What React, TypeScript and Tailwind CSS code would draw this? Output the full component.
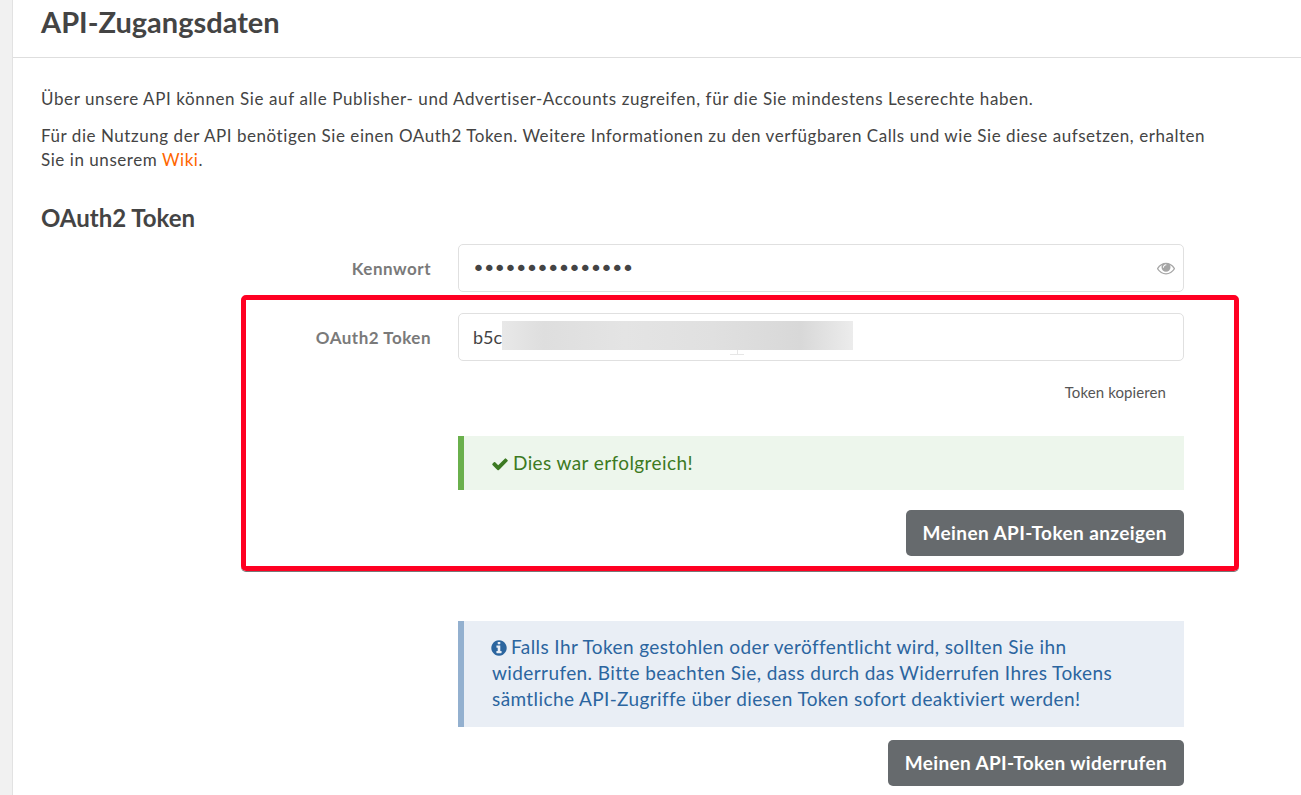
const Check = () => (
  <svg viewBox="0 0 1792 1792" className="w-[18px] h-[18px] inline-block shrink-0 fill-[#3c7a22] mr-[4px] ml-[-1px] align-[-3px]">
    <path d="M1671 566q0 40-28 68l-724 724-136 136q-28 28-68 28t-68-28l-136-136-362-362q-28-28-28-68t28-68l136-136q28-28 68-28t68 28l294 295 656-657q28-28 68-28t68 28l136 136q28 28 28 68z" />
  </svg>
)

const Info = () => (
  <svg viewBox="0 0 1792 1792" className="w-[18px] h-[18px] inline-block shrink-0 fill-[#2b659f] mr-[3px] ml-[-2px] align-[-3px]">
    <path d="M1152 1376v-160q0-14-9-23t-23-9h-96v-512q0-14-9-23t-23-9h-320q-14 0-23 9t-9 23v160q0 14 9 23t23 9h96v320h-96q-14 0-23 9t-9 23v160q0 14 9 23t23 9h448q14 0 23-9t9-23zm-128-896v-160q0-14-9-23t-23-9h-192q-14 0-23 9t-9 23v160q0 14 9 23t23 9h192q14 0 23-9t9-23zm640 416q0 209-103 385.5t-279.500 279.500-385.500 103-385.500-103-279.500-279.500-103-385.500 103-385.500 279.500-279.500 385.500-103 385.500 103 279.500 279.500 103 385.500z" />
  </svg>
)

const EyeIcon = () => (
  <svg viewBox="0 0 1792 1792" className="w-[18px] h-[18px] shrink-0 fill-[#a6a6a6]">
    <path d="M1664 960q-152-236-381-353 61 104 61 225 0 185-131.500 316.500t-316.500 131.500-316.500-131.500-131.500-316.500q0-121 61-225-229 117-381 353 133 205 333.500 326.500t434.500 121.500 434.500-121.500 333.500-326.500zm-720-384q0-20-14-34t-34-14q-125 0-214.500 89.500t-89.500 214.500q0 20 14 34t34 14 34-14 14-34q0-86 61-147t147-61q20 0 34-14t14-34zm848 384q0 34-20 69-140 230-376.500 368.500t-499.500 138.500-499.500-139-376.500-368q-20-35-20-69t20-69q140-229 376.500-368t499.500-139 499.500 139 376.500 368q20 35 20 69z" />
  </svg>
)

export default function App() {
  return (
    <div className="relative w-[1301px] h-[795px] overflow-hidden bg-white text-[#444444] font-['Lato','Noto_Sans',sans-serif]">
      <div className="flex h-full">
        <div className="w-[13px] shrink-0 bg-[#f1f1f1] border-r border-[#e2e2e2]"></div>
        <div className="flex-1">
          <div className="h-[58px] border-b border-[#dedede] pl-[28px] pt-[3px]">
            <h1 className="text-[29px] leading-[38px] font-bold text-[#444444]">API-Zugangsdaten</h1>
          </div>
          <div className="pl-[28px] pr-[80px] pt-[29px] text-[17px] leading-[24px]">
            <p className="tracking-[0.6px]">Über unsere API können Sie auf alle Publisher- und Advertiser-Accounts zugreifen, für die Sie mindestens Leserechte haben.</p>
            <p className="mt-[13px] tracking-[0.55px]">
              Für die Nutzung der API benötigen Sie einen OAuth2 Token. Weitere Informationen zu den verfügbaren Calls und wie Sie diese aufsetzen, erhalten Sie in unserem <span className="text-[#ff6600]">Wiki</span>.
            </p>
            <h2 className="mt-[31px] text-[24px] leading-[30px] font-bold tracking-normal">OAuth2 Token</h2>
          </div>
          <div className="ml-[445px] w-[726px] mt-[11px]">
            <div className="relative flex items-center h-[48px] rounded-[5px] border border-[#e0e0e0] pl-[13px] pr-[8px] justify-between">
              <span className="absolute right-[752px] top-[12px] whitespace-nowrap font-bold text-[17px] tracking-[0.5px] text-[#7a7a7a] leading-[24px]">Kennwort</span>
              <span className="font-['DejaVu_Sans',sans-serif] text-[22px] tracking-[-2.3px] text-[#444444] leading-none pt-[2px]">•••••••••••••••</span>
              <EyeIcon />
            </div>
            <div className="relative flex items-center h-[48px] rounded-[5px] border border-[#e0e0e0] pl-[14px] mt-[21px]">
              <span className="absolute right-[752px] top-[12px] whitespace-nowrap font-bold text-[17px] tracking-[0.5px] text-[#7a7a7a] leading-[24px]">OAuth2 Token</span>
              <span className="text-[18px] text-[#444444]">b5c</span>
              <div className="absolute left-[43px] top-[7px] w-[351px] h-[29px] bg-[linear-gradient(90deg,#e8e8e8_0%,#dedede_12%,#e4e4e4_35%,#e0e0e0_60%,#d8d8d8_85%,#ececec_100%)]"></div>
              <div className="absolute left-[271px] top-[36px] w-[14px] h-[5px] flex flex-col items-center">
                <div className="w-[1px] h-[4px] bg-[#e6e6e6]"></div>
                <div className="w-[14px] h-[1px] bg-[#e6e6e6]"></div>
              </div>
            </div>
            <div className="flex justify-end pr-[18px] mt-[21px] text-[15px] tracking-[0.1px] leading-[20px] text-[#555555]">Token kopieren</div>
            <div className="flex items-center h-[54px] mt-[34px] border-l-[6px] border-[#6ab04c] bg-[#edf6ec] pl-[28px] text-[19px] tracking-[0.4px] text-[#3c7a22]">
              <span><Check />Dies war erfolgreich!</span>
            </div>
            <div className="flex justify-end mt-[20px]">
              <button className="h-[46px] px-[17px] rounded-[5px] bg-[#666a6d] text-white font-bold text-[19px] tracking-[0.4px]">Meinen API-Token anzeigen</button>
            </div>
            <div className="mt-[65px] h-[106px] border-l-[6px] border-[#93b0cf] bg-[#e9eef5] pl-[28px] pr-[50px] pt-[13px] text-[19px] tracking-[0.4px] leading-[26px] text-[#2b659f]">
              <Info />Falls Ihr Token gestohlen oder veröffentlicht wird, sollten Sie ihn widerrufen. Bitte beachten Sie, dass durch das Widerrufen Ihres Tokens sämtliche API-Zugriffe über diesen Token sofort deaktiviert werden!
            </div>
            <div className="flex justify-end mt-[13px]">
              <button className="h-[46px] px-[17px] rounded-[5px] bg-[#666a6d] text-white font-bold text-[19px] tracking-[0.35px]">Meinen API-Token widerrufen</button>
            </div>
          </div>
        </div>
      </div>
      <div className="absolute left-[241px] top-[295px] w-[998px] h-[276px] rounded-[5px] border-[5px] border-[#ff0022] shadow-[0_1px_0_#777777]"></div>
    </div>
  )
}
